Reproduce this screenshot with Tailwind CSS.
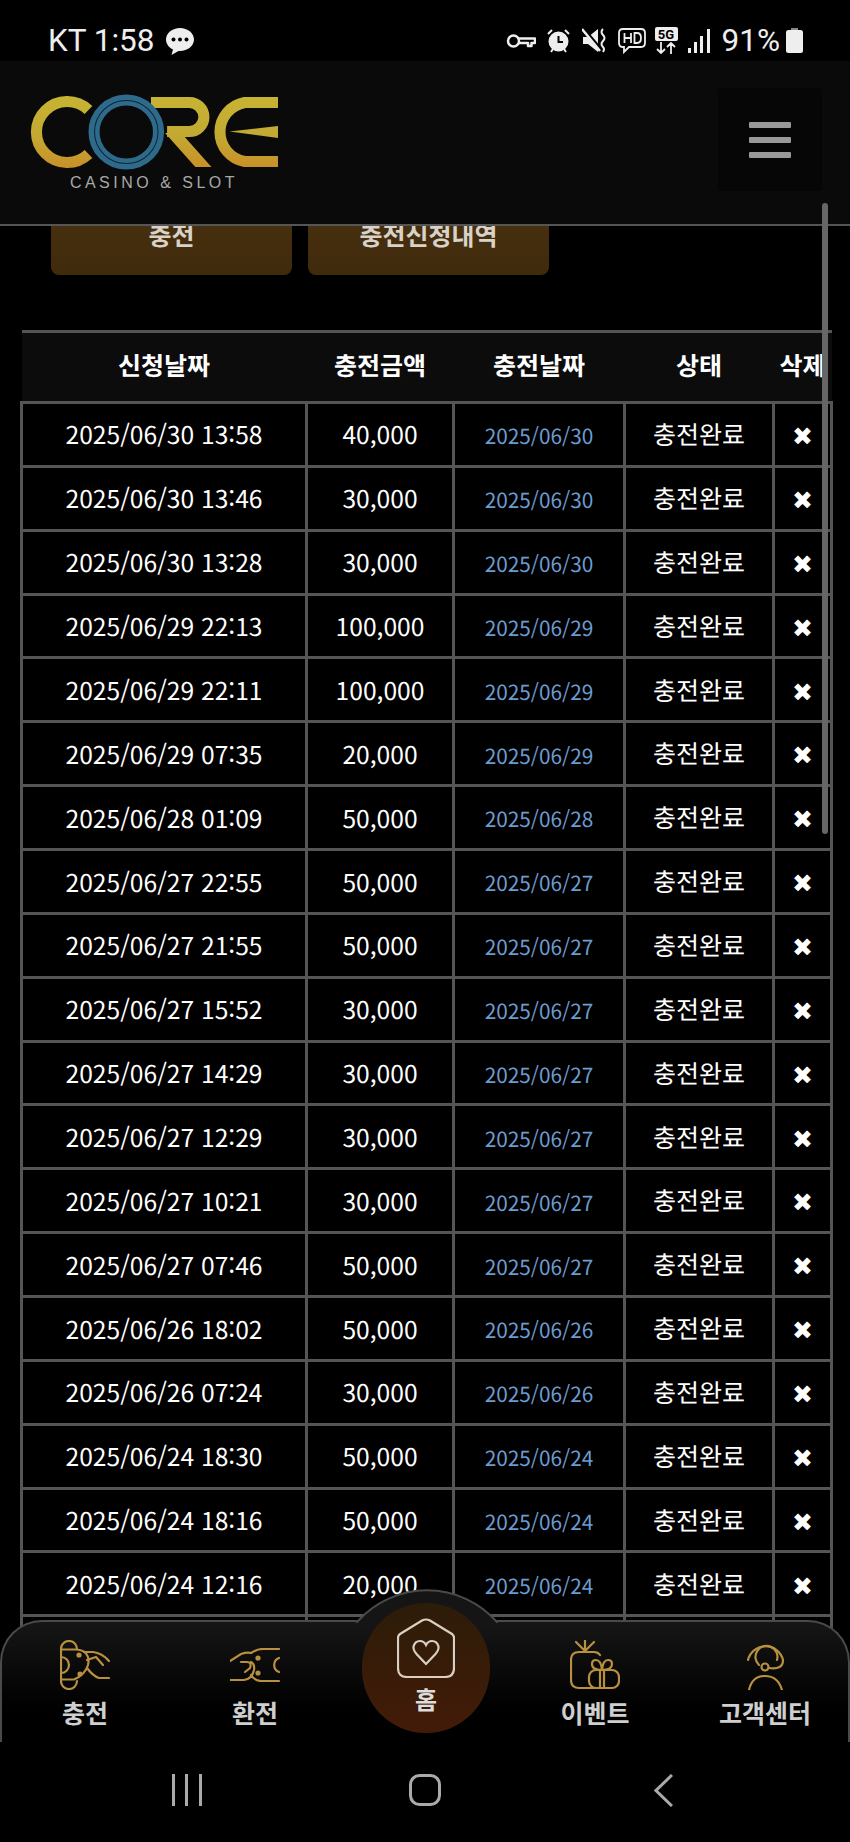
<!DOCTYPE html>
<html lang="ko">
<head>
  <meta charset="UTF-8" />
  <meta name="viewport" content="width=device-width, initial-scale=1.0"/>
  <title>충전신청내역</title>
  <script src="https://cdn.jsdelivr.net/npm/@tailwindcss/browser@4"></script>
</head>
<body class="bg-black">
<div class="relative flex h-[1842px] w-[850px] flex-col overflow-hidden bg-black font-['Noto_Sans_CJK_KR','Noto_Sans',sans-serif] text-white">

  <!-- status bar -->
  <div class="flex h-[61px] shrink-0 items-center justify-between pl-[48px] pr-[47px] pt-[20px] font-['Roboto',sans-serif] text-[31.500px] leading-none text-[#eee]">
    <div class="flex items-center gap-[11px]">
      <span>KT 1:58</span>
      <svg class="h-[28px] w-[28px]" viewBox="0 0 28 28"><path d="M14 1C6.500 1 0 6 0 12.500C0 17 3 20.500 7 22.500L5.500 28L12.500 24C13 24 13.500 24 14 24C21.500 24 28 19 28 12.500C28 6 21.500 1 14 1Z" fill="#eee"/><circle cx="7.500" cy="12.500" r="2" fill="#000"/><circle cx="14" cy="12.500" r="2" fill="#000"/><circle cx="20.500" cy="12.500" r="2" fill="#000"/></svg>
    </div>
    <div class="flex items-center">
      <svg class="h-[16px] w-[30px]" viewBox="0 0 30 16" fill="none" stroke="#eee" stroke-width="2.500"><circle cx="7.500" cy="8" r="5.500"/><path d="M13 5.500H29V10H25.500V13H22V10H13" stroke-linejoin="round"/></svg>
      <svg class="ml-[11px] h-[25px] w-[23px]" viewBox="0 0 23 25" fill="none" stroke="#eee" stroke-width="2"><circle cx="11.500" cy="13.500" r="9" fill="#eee"/><path d="M11.500 8V14H16" stroke="#000"/><path d="M1 6L5 2M22 6L18 2M4 24L6 21M19 24L17 21"/></svg>
      <svg class="ml-[12px] h-[25px] w-[24px]" viewBox="0 0 24 25" fill="none" stroke="#eee" stroke-width="2"><path d="M1 9H6L16 1V24L6 16H1Z" fill="#eee" stroke="none"/><path d="M2 2L19 22" stroke="#000" stroke-width="4"/><path d="M0 1L18 23" stroke-width="2.500"/><path d="M21 1Q18 4 21 7Q24 10 21 13Q18 16 21 19Q23 21 21 24" stroke-width="2"/></svg>
      <svg class="ml-[12px] h-[26px] w-[28px]" viewBox="0 0 28 26" fill="none" stroke="#eee" stroke-width="1.800"><path d="M5 1H23Q27 1 27 5V15Q27 19 23 19H11L6 24V19H5Q1 19 1 15V5Q1 1 5 1Z"/><path d="M6.500 5V15M13 5V15M6.500 10H13M16.500 5V15H19Q23 15 23 10Q23 5 19 5Z"/></svg>
      <div class="ml-[9px] flex h-[27px] w-[23px] flex-col items-center">
        <span class="flex h-[14px] w-[23px] items-center justify-center rounded-[2px] bg-[#eee] text-[13px] font-bold leading-none text-black">5G</span>
        <svg class="mt-[1px] h-[12px] w-[20px]" viewBox="0 0 20 12" fill="none" stroke="#eee" stroke-width="1.800"><path d="M5 0V11M1 7L5 11L9 7M15 12V1M11 5L15 1L19 5"/></svg>
      </div>
      <svg class="ml-[10px] h-[24px] w-[22px]" viewBox="0 0 22 24" fill="#eee"><rect x="0" y="19" width="3" height="5"/><rect x="6" y="13" width="3" height="11"/><rect x="12" y="7" width="3" height="17" /><rect x="19" y="0" width="3" height="24"/></svg>
      <span class="ml-[12px]">91%</span>
      <svg class="ml-[6px] h-[25px] w-[17px]" viewBox="0 0 17 25"><rect x="5" y="0" width="7" height="3" fill="#888"/><rect x="0" y="2" width="17" height="23" rx="2.500" fill="#eee"/></svg>
    </div>
  </div>

  <!-- header -->
  <div class="relative z-10 flex h-[165px] shrink-0 items-start justify-between border-b-2 border-[#555] bg-[#0a0a0a] pl-[28px] pr-[28px] pt-[27px]">
    <div class="mt-[6px] flex w-[252px] flex-col items-center">
      <svg class="h-[78px] w-[252px]" viewBox="30 93 250 78" preserveAspectRatio="none">
        <defs>
          <linearGradient id="gold" gradientUnits="userSpaceOnUse" x1="0" y1="95" x2="0" y2="168">
            <stop offset="0" stop-color="#c6b434"/><stop offset="0.55" stop-color="#c3a932"/><stop offset="1" stop-color="#c98f28"/>
          </linearGradient>
        </defs>
        <path d="M90 109A30.500 30.500 0 1 0 90 153" fill="none" stroke="url(#gold)" stroke-width="11"/>
        <path d="M152 101.500H190A14.500 14.500 0 0 1 190 130.500H168" fill="none" stroke="url(#gold)" stroke-width="11"/>
        <path d="M166 132H182L212 166H196Z" fill="url(#gold)"/>
        <path d="M278 101.500H245A30 30 0 0 0 245 160.500H278" fill="none" stroke="url(#gold)" stroke-width="11"/>
        <path d="M230 130.500L278 125V137Z" fill="url(#gold)"/>
        <circle cx="127.500" cy="131" r="32" fill="#0a0a0a" stroke="#2e6a8c" stroke-width="11"/>
        <circle cx="127.500" cy="131" r="31.500" fill="none" stroke="#0e2530" stroke-width="1"/>
      </svg>
      <span class="mt-[1px] font-['Liberation_Sans',sans-serif] text-[16px] leading-[20px] tracking-[3.500px] text-[#a8a8a8]">CASINO &amp; SLOT</span>
    </div>
    <div class="flex h-[103px] w-[104px] flex-col items-center justify-center gap-[9px] rounded-[4px] bg-[#060606]">
      <span class="h-[6px] w-[42px] rounded-[1px] bg-[#999]"></span>
      <span class="h-[6px] w-[42px] rounded-[1px] bg-[#999]"></span>
      <span class="h-[6px] w-[42px] rounded-[1px] bg-[#999]"></span>
    </div>
  </div>

  <!-- content -->
  <div class="min-h-0 flex-1 overflow-hidden">
    <div class="-mt-[21px] flex gap-[16px] pl-[51px]">
      <button class="h-[70px] w-[241px] rounded-[8px] bg-gradient-to-b from-[#4a3210] to-[#3f2a0c] pb-[11px] text-[25px] font-bold text-[#d8d2c8]">충전</button>
      <button class="h-[70px] w-[241px] rounded-[8px] bg-gradient-to-b from-[#4a3210] to-[#3f2a0c] pb-[11px] text-[25px] font-bold text-[#d8d2c8]">충전신청내역</button>
    </div>

    <table class="ml-[20px] mt-[55px] w-[810px] table-fixed border-collapse text-center text-[24.600px] [text-rendering:geometricPrecision] [font-variant-ligatures:none] [&_td]:h-[63.860px] [&_td]:border-[3px] [&_td]:border-[#555] [&_td]:p-0 [&_td]:pt-[1px]">
      <colgroup>
        <col class="w-[285px]"/><col class="w-[147px]"/><col class="w-[171px]"/><col class="w-[149px]"/><col class="w-[58px]"/>
      </colgroup>
      <thead>
        <tr class="h-[71px] border-y-[3px] border-[#555] bg-[#0c0c0c] text-[25px] font-bold">
          <th class="pb-[2px] font-bold">신청날짜</th><th class="pb-[2px] font-bold">충전금액</th><th class="pb-[2px] font-bold">충전날짜</th><th class="pb-[2px] font-bold">상태</th><th class="pb-[2px] font-bold">삭제</th>
        </tr>
      </thead>
      <tbody class="[&_td:nth-child(3)]:pt-[3px] [&_td:nth-child(3)]:text-[20.800px] [&_td:nth-child(3)]:text-[#6c9bd0] [&_td:nth-child(4)]:text-[25px] [&_td:nth-child(5)]:pt-[5px] [&_td:nth-child(5)]:font-['DejaVu_Sans',sans-serif] [&_td:nth-child(5)]:text-[25px]">
        <tr><td>2025/06/30 13:58</td><td>40,000</td><td>2025/06/30</td><td>충전완료</td><td>✖</td></tr>
        <tr><td>2025/06/30 13:46</td><td>30,000</td><td>2025/06/30</td><td>충전완료</td><td>✖</td></tr>
        <tr><td>2025/06/30 13:28</td><td>30,000</td><td>2025/06/30</td><td>충전완료</td><td>✖</td></tr>
        <tr><td>2025/06/29 22:13</td><td>100,000</td><td>2025/06/29</td><td>충전완료</td><td>✖</td></tr>
        <tr><td>2025/06/29 22:11</td><td>100,000</td><td>2025/06/29</td><td>충전완료</td><td>✖</td></tr>
        <tr><td>2025/06/29 07:35</td><td>20,000</td><td>2025/06/29</td><td>충전완료</td><td>✖</td></tr>
        <tr><td>2025/06/28 01:09</td><td>50,000</td><td>2025/06/28</td><td>충전완료</td><td>✖</td></tr>
        <tr><td>2025/06/27 22:55</td><td>50,000</td><td>2025/06/27</td><td>충전완료</td><td>✖</td></tr>
        <tr><td>2025/06/27 21:55</td><td>50,000</td><td>2025/06/27</td><td>충전완료</td><td>✖</td></tr>
        <tr><td>2025/06/27 15:52</td><td>30,000</td><td>2025/06/27</td><td>충전완료</td><td>✖</td></tr>
        <tr><td>2025/06/27 14:29</td><td>30,000</td><td>2025/06/27</td><td>충전완료</td><td>✖</td></tr>
        <tr><td>2025/06/27 12:29</td><td>30,000</td><td>2025/06/27</td><td>충전완료</td><td>✖</td></tr>
        <tr><td>2025/06/27 10:21</td><td>30,000</td><td>2025/06/27</td><td>충전완료</td><td>✖</td></tr>
        <tr><td>2025/06/27 07:46</td><td>50,000</td><td>2025/06/27</td><td>충전완료</td><td>✖</td></tr>
        <tr><td>2025/06/26 18:02</td><td>50,000</td><td>2025/06/26</td><td>충전완료</td><td>✖</td></tr>
        <tr><td>2025/06/26 07:24</td><td>30,000</td><td>2025/06/26</td><td>충전완료</td><td>✖</td></tr>
        <tr><td>2025/06/24 18:30</td><td>50,000</td><td>2025/06/24</td><td>충전완료</td><td>✖</td></tr>
        <tr><td>2025/06/24 18:16</td><td>50,000</td><td>2025/06/24</td><td>충전완료</td><td>✖</td></tr>
        <tr><td>2025/06/24 12:16</td><td>20,000</td><td>2025/06/24</td><td>충전완료</td><td>✖</td></tr>
        <tr><td></td><td></td><td></td><td></td><td></td></tr>
      </tbody>
    </table>
  </div>

  <!-- scrollbar -->
  <div class="absolute left-[822px] top-[203px] z-20 h-[631px] w-[6px] rounded-full bg-[#666]"></div>

  <!-- bottom menu -->
  <div class="absolute bottom-[100px] left-0 z-30 h-[122px] w-[850px]">
    <div class="absolute inset-0 rounded-t-[42px] border-x-2 border-t-2 border-[#4a4a4a] bg-gradient-to-b from-[#161616] via-[#070707] to-black"></div>
    <svg class="absolute left-[356px] top-[-35px] h-[38px] w-[142px]" viewBox="0 0 142 38"><path d="M0 38L2 36A93 93 0 0 1 140 36L142 38Z" fill="#151515"/><path d="M0 38L2 36A93 93 0 0 1 140 36L142 38" fill="none" stroke="#4a4a4a" stroke-width="2"/></svg>
    <div class="relative grid h-full grid-cols-5">
      <a class="flex flex-col items-center pt-[20px]">
        <svg class="h-[50px] w-[50px]" viewBox="0 0 50 50" fill="none" stroke="#b8903f" stroke-width="2.200" stroke-linecap="round"><path d="M1 9V41A8 8 0 0 0 17 41M1 9A8 8 0 0 1 17 9"/><path d="M1 9.500H16Q26 10 28 17Q29 21 28 25Q25 35 14 39.500H2"/><path d="M1 17A8 8 0 0 1 1 33"/><path d="M24 12H33Q42 13 49 21M27 20L36 17L43 25M27 28Q33 36 39 38H49"/><circle cx="19" cy="15" r="1.500" fill="#b8903f"/><circle cx="20" cy="34" r="1.500" fill="#b8903f"/></svg>
        <span class="mt-[4px] text-[25px] font-bold leading-[36px] text-[#cfcfcf]">충전</span>
      </a>
      <a class="flex flex-col items-center pt-[28px]">
        <svg class="h-[34px] w-[50px]" viewBox="0 0 50 34" fill="none" stroke="#b8903f" stroke-width="2.200" stroke-linecap="round"><path d="M0 13L11 6Q17 4 21 5Q27 1 33 1H49M21 27Q25 33 31 33H49M0 32H14Q22 31 24 22Q25 16 21 14M11 14H17Q22 14 20 20L15 24M49 10A7.500 7.500 0 0 0 49 24"/><circle cx="28" cy="10" r="1.500" fill="#b8903f"/><circle cx="28" cy="25" r="1.500" fill="#b8903f"/></svg>
        <span class="mt-[12px] text-[25px] font-bold leading-[36px] text-[#cfcfcf]">환전</span>
      </a>
      <a class="relative flex flex-col items-center">
        <div class="absolute left-[22px] top-[-17px] flex h-[130px] w-[128px] flex-col items-center rounded-full bg-gradient-to-b from-[#2c1c08] to-[#431b08] pt-[15px]">
          <svg class="h-[60px] w-[58px]" viewBox="0 0 58 60" fill="none" stroke="#d9cfc2" stroke-width="2.200"><path d="M3 16L25 2.500Q29 0.500 33 2.500L55 16Q57 17.500 57 20V50Q57 59 48 59H10Q1 59 1 50V20Q1 17.500 3 16Z"/><path d="M29 46L19.500 36Q16 32 16.500 28.500Q18 23 23 23Q27 23 29 27Q31 23 35 23Q40 23 41.500 28.500Q42 32 38.500 36Z"/></svg>
          <span class="mt-[3px] text-[24px] font-bold leading-[36px] text-[#ddd]">홈</span>
        </div>
      </a>
      <a class="flex flex-col items-center pt-[20px]">
        <svg class="h-[50px] w-[50px]" viewBox="0 0 50 50" fill="none" stroke="#b8903f" stroke-width="2.200" stroke-linecap="round"><path d="M30 15Q28 12 24 12H9Q1 12 1 20V40Q1 48 9 48H24"/><path d="M15 11L6 2M15 11V0M15 11L24 2"/><rect x="19" y="30" width="30" height="18" rx="7"/><path d="M30 30V48M34 30V48M32 30Q22 30 22 24Q22 20 26 20Q31 20 32 30Q33 20 38 20Q42 20 42 24Q42 30 32 30"/></svg>
        <span class="mt-[4px] text-[25px] font-bold leading-[36px] text-[#cfcfcf]">이벤트</span>
      </a>
      <a class="flex flex-col items-center pt-[20px]">
        <svg class="h-[50px] w-[37px]" viewBox="0 0 37 50" fill="none" stroke="#b8903f" stroke-width="2.200" stroke-linecap="round"><path d="M1 20A18 18 0 0 1 36 20Q36 30 22 28"/><path d="M12 25A11 11 0 1 1 30 20"/><circle cx="18" cy="27" r="3.500"/><path d="M2 50Q5 36 18 36Q31 36 35 50"/></svg>
        <span class="mt-[4px] text-[25px] font-bold leading-[36px] text-[#cfcfcf]">고객센터</span>
      </a>
    </div>
  </div>

  <!-- android nav -->
  <div class="mx-auto grid h-[100px] w-[714px] shrink-0 grid-cols-3 items-center justify-items-center pb-[4px]">
    <svg class="h-[32px] w-[32px]" viewBox="0 0 32 32" fill="#aaa"><rect x="1" y="0" width="3" height="32"/><rect x="14" y="0" width="3" height="32"/><rect x="28" y="0" width="3" height="32"/></svg>
    <svg class="h-[32px] w-[32px]" viewBox="0 0 32 32" fill="none" stroke="#aaa" stroke-width="3"><rect x="1.500" y="1.500" width="29" height="29" rx="9"/></svg>
    <svg class="h-[33px] w-[19px]" viewBox="0 0 19 33" fill="none" stroke="#aaa" stroke-width="3"><path d="M18 1L2 16.500L18 32"/></svg>
  </div>
</div>
</body>
</html>
